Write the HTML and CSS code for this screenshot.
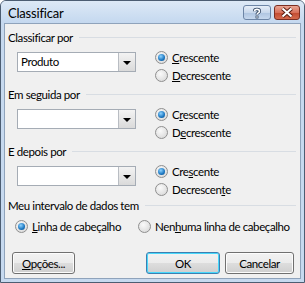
FILE: index.html
```html
<!DOCTYPE html>
<html lang="pt">
<head>
    <meta charset="UTF-8">
    <title>Classificar</title>
    <link rel="stylesheet" href="styles.css">
</head>
<body>
    <div class="window">
        <div class="titlebar">
            <span class="title">Classificar</span>
            <div class="caption-buttons">
                <div class="cap help">
                    <svg width="12" height="12" viewBox="0 0 12 12">
                        <path d="M3.5 4.2 C3.5 1.8 8.5 1.8 8.5 4.2 C8.5 5.8 6 5.8 6 7.6" fill="none" stroke="#2a3f5c" stroke-width="3.2"/>
                        <path d="M3.5 4.2 C3.5 1.8 8.5 1.8 8.5 4.2 C8.5 5.8 6 5.8 6 7.6" fill="none" stroke="#fff" stroke-width="1.6"/>
                        <rect x="4.6" y="8.6" width="2.8" height="2.8" fill="#2a3f5c"/>
                        <rect x="5.3" y="9.3" width="1.4" height="1.4" fill="#fff"/>
                    </svg>
                </div>
                <div class="cap close">
                    <svg width="14" height="11" viewBox="0 0 14 11">
                        <path d="M2.5 1.5 L11.5 9.5 M11.5 1.5 L2.5 9.5" stroke="#5a1d12" stroke-width="4"/>
                        <path d="M2.5 1.5 L11.5 9.5 M11.5 1.5 L2.5 9.5" stroke="#fff" stroke-width="2"/>
                    </svg>
                </div>
            </div>
        </div>

        <div class="client">
            <div class="group-label"><span>Classificar por</span></div>
            <div class="sort-row">
                <div class="combo"><span class="combo-text">Produto</span><span class="combo-btn"></span></div>
                <div class="radios">
                    <div class="radio checked"><span class="dot"></span><span><u>C</u>rescente</span></div>
                    <div class="radio"><span class="dot"></span><span><u>D</u>ecrescente</span></div>
                </div>
            </div>

            <div class="group-label"><span>Em seguida por</span></div>
            <div class="sort-row">
                <div class="combo"><span class="combo-text"></span><span class="combo-btn"></span></div>
                <div class="radios">
                    <div class="radio checked"><span class="dot"></span><span>C<u>r</u>escente</span></div>
                    <div class="radio"><span class="dot"></span><span>D<u>e</u>crescente</span></div>
                </div>
            </div>

            <div class="group-label"><span>E depois por</span></div>
            <div class="sort-row last">
                <div class="combo"><span class="combo-text"></span><span class="combo-btn"></span></div>
                <div class="radios">
                    <div class="radio checked"><span class="dot"></span><span>Cre<u>s</u>cente</span></div>
                    <div class="radio"><span class="dot"></span><span>Decrescen<u>t</u>e</span></div>
                </div>
            </div>

            <div class="group-label"><span>Meu intervalo de dados tem</span></div>
            <div class="header-row">
                <div class="radio checked"><span class="dot"></span><span><u>L</u>inha de cabeçalho</span></div>
                <div class="radio"><span class="dot"></span><span>Nen<u>h</u>uma linha de cabeçalho</span></div>
            </div>

            <div class="footer">
                <div class="btn options"><span><u>O</u>pções...</span></div>
                <div class="btn default ok">OK</div>
                <div class="btn cancel">Cancelar</div>
            </div>
        </div>
    </div>
</body>
</html>
```

FILE: styles.css
```css
body {
    margin: 0;
    font-family: Lato, "Noto Sans", sans-serif;
    font-size: 11.5px;
    letter-spacing: -0.4px;
    white-space: nowrap;
    color: #000;
    background: #fff;
}
u {
    text-decoration: underline;
    text-underline-offset: 1px;
}
.window {
    width: 305px;
    height: 283px;
    box-sizing: border-box;
    border: 1px solid #4c5d72;
    border-radius: 6px 6px 0 0;
    background: #c6d9ef;
    display: flex;
    flex-direction: column;
    padding: 0 3px 3px 3px;
}
.titlebar {
    height: 22px;
    display: flex;
    align-items: center;
    justify-content: space-between;
    background: linear-gradient(#dde9f6, #c4d8ef);
    margin: 0 -3px;
    padding: 0 4px 0 7px;
    border-radius: 5px 5px 0 0;
}
.title {
    font-size: 13px;
    letter-spacing: -0.2px;
    color: #000;
    margin-top: 1px;
}
.caption-buttons {
    display: flex;
    gap: 3px;
    align-self: flex-start;
    margin-top: 4px;
}
.cap {
    height: 15px;
    box-sizing: border-box;
    border: 1px solid #6d85a6;
    border-radius: 3px;
    display: flex;
    align-items: center;
    justify-content: center;
}
.help {
    width: 28px;
    background: linear-gradient(#e6eef8 0%, #c8d8ec 50%, #aec4e0 51%, #c6d8ee 100%);
}
.close {
    width: 26px;
    border-color: #7b2e22;
    background: linear-gradient(#e9a594 0%, #d8715b 50%, #c24a30 51%, #d4694c 100%);
}
.client {
    flex: 1;
    background: #f0f0f0;
    border: 1px solid #8fa3bb;
    padding: 6px 4px 0 3px;
    display: flex;
    flex-direction: column;
}
.group-label {
    display: flex;
    align-items: center;
    gap: 6px;
    height: 15px;
    line-height: 15px;
}
.group-label::after {
    content: '';
    flex: 1;
    height: 1px;
    background: #d8dde3;
}
.sort-row {
    display: flex;
    align-items: flex-start;
    margin: 3px 0 3px 9px;
}
.sort-row.last {
    margin-bottom: 0;
}
.combo {
    width: 119px;
    height: 20px;
    box-sizing: border-box;
    border: 1px solid #a5acb5;
    background: #fff;
    display: flex;
    margin-top: 4px;
}
.combo-text {
    flex: 1;
    padding-left: 3px;
    line-height: 18px;
}
.combo-btn {
    width: 16px;
    border-left: 1px solid #b9bdc3;
    background: linear-gradient(#f3f3f3, #dadada);
    position: relative;
}
.combo-btn::after {
    content: '';
    position: absolute;
    left: 4px;
    top: 8px;
    border-left: 4px solid transparent;
    border-right: 4px solid transparent;
    border-top: 4px solid #000;
}
.radios {
    display: flex;
    flex-direction: column;
    margin-left: 19px;
}
.radio {
    display: flex;
    align-items: center;
    gap: 4px;
    height: 18px;
}
.dot {
    width: 13px;
    height: 13px;
    flex: none;
    box-sizing: border-box;
    border-radius: 50%;
    border: 1px solid #8f8f8f;
    background: radial-gradient(circle at 40% 35%, #fafafa, #d4d4d4);
    display: flex;
    align-items: center;
    justify-content: center;
}
.checked .dot::after {
    content: '';
    width: 7px;
    height: 7px;
    border-radius: 50%;
    background: radial-gradient(circle at 40% 35%, #8fd3ff, #1a76c0 60%, #0b4780);
}
.header-row {
    display: flex;
    margin: 4px 0 0 7px;
    gap: 17px;
    height: 18px;
    align-items: center;
}
.footer {
    display: flex;
    align-items: center;
    margin-top: 17px;
    padding: 0 2px 0 4px;
}
.btn {
    height: 22px;
    box-sizing: border-box;
    border: 1px solid #707070;
    border-radius: 3px;
    background: linear-gradient(#f2f2f2 0%, #ebebeb 50%, #dddddd 51%, #cfcfcf 100%);
    display: flex;
    align-items: center;
    justify-content: center;
    box-shadow: inset 0 0 0 1px #fcfcfc;
}
.options {
    width: 63px;
}
.ok {
    width: 74px;
    margin-left: auto;
}
.default {
    border-color: #3c7fb1;
    box-shadow: inset 0 0 0 1px #48d8fb;
}
.cancel {
    width: 69px;
    margin-left: 5px;
}
```
